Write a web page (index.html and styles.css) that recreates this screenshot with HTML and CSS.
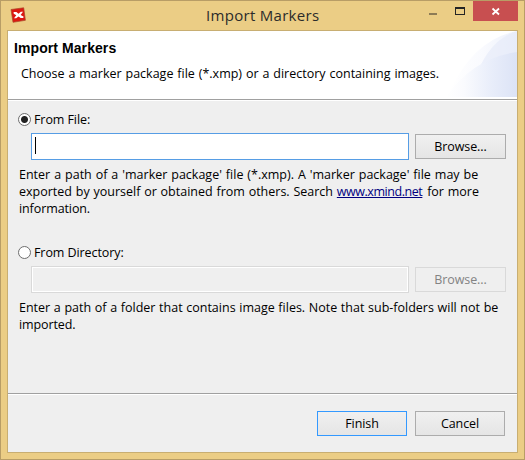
FILE: index.html
```
<!DOCTYPE html>
<html lang="en">
<head>
<meta charset="utf-8">
<title>Import Markers</title>
<link rel="stylesheet" href="styles.css">
</head>
<body>
<div class="window">
  <header class="titlebar">
    <svg class="app-icon" width="17" height="17" viewBox="0 0 17 17">
      <path d="M1 2.5 L13.7 .8 L15.4 13.3 L3 15.3 Z" fill="#dc1711" stroke="#a8492a" stroke-width=".7"/>
      <path d="M3.6 5.1 L6.4 5 L8.5 6.8 L10.8 4.8 L13 4.8 L10.6 8 L13.5 9.6 L13.3 11 L10.7 11 L8.5 9.5 L6.2 11.3 L4 11.2 L6.3 8.2 L3.7 6.8 Z" fill="#fff"/>
    </svg>
    <h1 class="title">Import Markers</h1>
    <div class="controls">
      <svg width="44" height="20" viewBox="0 0 44 20">
        <rect x="0" y="12" width="8" height="2" fill="#8d7b55"/>
        <path d="M26 6h10v8H26z M27 8v5h8V8z" fill="#242424" fill-rule="evenodd"/>
      </svg>
      <div class="close">
        <svg width="45" height="20" viewBox="0 0 45 20"><path d="M19.5 7.5 L26 13.5 M26 7.5 L19.5 13.5" stroke="#fff" stroke-width="1.8"/></svg>
      </div>
    </div>
  </header>
  <main class="dialog">
    <section class="banner">
      <svg class="swoosh" width="71" height="66" viewBox="0 0 71 66">
        <defs>
          <linearGradient id="a"><stop offset="0" stop-color="#fff"/><stop offset=".5" stop-color="#f9fafe"/><stop offset="1" stop-color="#edf1fb"/></linearGradient>
          <linearGradient id="b"><stop offset="0" stop-color="#fff"/><stop offset=".25" stop-color="#fafbfe"/><stop offset=".65" stop-color="#e8edfa"/><stop offset="1" stop-color="#dce3f6"/></linearGradient>
        </defs>
        <path d="M4 60 Q28 8 71 0 V66 H4Z" fill="url(#a)"/>
        <path d="M33 38 Q46 8 71 0 V24 Q49 28 33 38Z" fill="#e4eaf8" opacity=".6"/>
        <path d="M0 66 Q27 27 71 21 V66Z" fill="url(#b)"/>
      </svg>
      <h2 class="heading"><span>Import Markers</span></h2>
      <p class="lead"><span>Choose a marker package file (*.xmp) or a directory containing images.</span></p>
    </section>
    <section class="content">
      <div class="choice"><i class="radio checked"></i><span class="label">From File:</span></div>
      <div class="row"><div class="field active"><i class="caret"></i></div><div class="button wide"><span>Browse...</span></div></div>
      <p class="note"><span class="n1">Enter a path of a 'marker package' file (*.xmp). A 'marker package' file may be</span><span class="n2">exported by yourself or obtained from others. Search <a>www.xmind.net</a> for more</span><span class="n3">information.</span></p>
      <div class="choice second"><i class="radio"></i><span class="label">From Directory:</span></div>
      <div class="row"><div class="field disabled"></div><div class="button wide off"><span>Browse...</span></div></div>
      <p class="note"><span class="n4">Enter a path of a folder that contains image files. Note that sub-folders will not be</span><span class="n3">imported.</span></p>
    </section>
    <footer class="footer"><div class="button primary"><span>Finish</span></div><div class="button"><span>Cancel</span></div></footer>
  </main>
</div>
</body>
</html>
```
FILE: styles.css
```
* { box-sizing: border-box; }
body { margin: 0; font: 12.5px/17px "Open Sans", "Noto Sans", sans-serif; color: #000; }
h1, h2, p { margin: 0; font-weight: normal; }
.window { width: 525px; height: 460px; border: 1px solid #b89d66; background: #ebcd85; padding: 0 6px 6px; display: flex; flex-direction: column; }
.titlebar { height: 29px; display: flex; flex: none; }
.app-icon { margin: 6px 0 0 3px; flex: none; }
.title { flex: 1; padding: 4px 0 0 179px; font-size: 15px; line-height: 20px; letter-spacing: .3px; color: #2b2b2b; white-space: nowrap; }
.controls { display: flex; width: 89px; flex: none; }
.controls svg { display: block; }
.close { width: 45px; height: 20px; background: #c84f50; }
.dialog { flex: 1; min-height: 0; border: 1px solid #c8ae72; background: #efefef; display: flex; flex-direction: column; }
.banner { height: 70px; flex: none; background: #fff; border-bottom: 1px solid #fff; position: relative; box-shadow: inset 0 -1px #a0a0a0; white-space: nowrap; }
.swoosh { position: absolute; right: 0; top: 0; }
.heading { position: relative; padding: 9px 0 0 6px; font: bold 14px/17px "Liberation Sans", Arial, sans-serif; letter-spacing: .08px; }
.lead { position: relative; padding: 8px 0 0 13px; word-spacing: .65px; }
.content { flex: 1; padding: 11px 11px 0 10px; }
.choice { display: flex; align-items: center; height: 15px; }
.second { margin-top: 28px; }
.label { letter-spacing: -.08px; }
.radio { width: 13px; height: 13px; border: 1px solid #6e6e6e; border-radius: 50%; background: #fff; margin-right: 3px; }
.checked { background: radial-gradient(circle, #222 3px, #fff 4px); }
.row { display: flex; justify-content: space-between; align-items: center; margin: 6px 0 0 13px; height: 27px; }
.field { width: 378px; height: 27px; padding: 3px; background: #fff; border: 1px solid #569de5; }
.disabled { background: #efefef; border-color: #d9d9d9; box-shadow: inset 0 0 0 1px #fff; }
.caret { display: block; width: 1px; height: 17px; background: #000; }
.button { width: 90px; height: 25px; border: 1px solid #acacac; background: linear-gradient(#f0f0f0, #e5e5e5); text-align: center; line-height: 23px; letter-spacing: -.1px; }
.wide { width: 91px; }
.off { color: #838383; background: #efefef; border-color: #d9d9d9; }
.primary { border-color: #3399ff; }
.note { padding: 6px 0 0 1px; white-space: nowrap; }
.note > span { display: block; width: max-content; }
.n1 { word-spacing: .7px; }
.n2 { word-spacing: .55px; }
.n3 { letter-spacing: -.1px; }
.n4 { word-spacing: .4px; }
.note a { color: #000080; text-decoration: underline; letter-spacing: -.45px; margin-right: 1px; }
.footer { height: 59px; flex: none; border-top: 1px solid #a0a0a0; box-shadow: inset 0 1px #fff; display: flex; justify-content: flex-end; gap: 8px; padding: 17px 12px 0 0; }
```
